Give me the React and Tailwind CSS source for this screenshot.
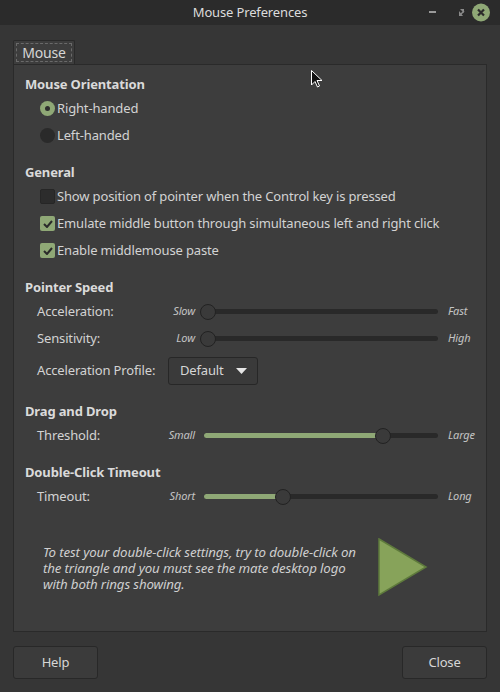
import React from "react";

const font = { fontFamily: '"Noto Sans", "Open Sans", sans-serif', letterSpacing: "-0.15px" };

const Header = ({ children }) => (
  <div className="h-[20px] flex items-center text-[13px] font-bold text-[#dadada]">{children}</div>
);

const Radio = ({ checked, label }) => (
  <div className="h-[27px] flex items-center pl-[15px]">
    {checked ? (
      <span className="w-[15px] h-[15px] rounded-full bg-[#8fa876] flex items-center justify-center">
        <span className="w-[5px] h-[5px] rounded-full bg-[#2d2d2d]" />
      </span>
    ) : (
      <span className="w-[15px] h-[15px] rounded-full bg-[#2a2a2a]" />
    )}
    <span className="ml-[2px] text-[13px] text-[#d3d3d3]">{label}</span>
  </div>
);

const Check = ({ checked, label }) => (
  <div className="h-[27px] flex items-center pl-[15px]">
    {checked ? (
      <span className="w-[15px] h-[15px] rounded-[2px] bg-[#8fa876] flex items-center justify-center">
        <svg width="10" height="8" viewBox="0 0 10 8">
          <path d="M1 4 L4 7 L9 1" fill="none" stroke="#2a2a2a" strokeWidth="2" />
        </svg>
      </span>
    ) : (
      <span className="w-[15px] h-[15px] rounded-[2px] bg-[#2c2c2c] border border-[#262626]" />
    )}
    <span className="ml-[2px] text-[13px] text-[#d3d3d3]">{label}</span>
  </div>
);

const Slider = ({ label, min, max, value, filled }) => {
  const pct = value * 226 + 4;
  return (
    <div className="h-[27px] flex items-center pl-[12px]">
      <span className="w-[131px] text-[13px] text-[#d3d3d3]">{label}</span>
      <span className="w-[27px] text-right text-[11px] italic text-[#c4c4c4] whitespace-nowrap">{min}</span>
      <div className="relative ml-[9px] w-[234px] h-[16px] flex items-center">
        <div className="w-full h-[5px] rounded-full bg-[#292929] overflow-hidden">
          {filled && <div className="h-full bg-[#8fa876]" style={{ width: pct }} />}
        </div>
        <span
          className="absolute top-0 w-[16px] h-[16px] rounded-full bg-[#3a3a3a] border border-[#222]"
          style={{ left: pct - 8 }}
        />
      </div>
      <span className="ml-[10px] text-[11px] italic text-[#c4c4c4]">{max}</span>
    </div>
  );
};

export default function App() {
  return (
    <div className="w-[500px] h-[692px] bg-[#363636] flex flex-col relative" style={font}>
      {/* Title bar */}
      <div className="h-[25px] bg-[#2b2b2b] flex items-center relative">
        <div className="flex-1 text-center text-[13px] text-[#dcdcdc]">Mouse Preferences</div>
        <div className="absolute right-[6px] top-0 h-[25px] flex items-center">
          <svg width="30" height="25" viewBox="0 0 30 25">
            <rect x="19" y="11" width="7" height="2" fill="#9a9a9a" />
          </svg>
          <svg width="30" height="25" viewBox="0 0 30 25">
            <path d="M20 9 L24 9 L24 13 Z" fill="#8a8a8a" />
            <path d="M19 11 L19 16 L23 16 Z" fill="#8a8a8a" />
            <path d="M19.5 15.5 L24 11" stroke="#8a8a8a" strokeWidth="1.5" />
          </svg>
          <svg width="24" height="25" viewBox="0 0 24 25">
            <circle cx="11" cy="12.5" r="9" fill="#8fa876" />
            <path d="M8 9.5 L14 15.5 M14 9.5 L8 15.5" stroke="#2b2b2b" strokeWidth="2.2" />
          </svg>
        </div>
      </div>

      {/* Tab */}
      <div className="mt-[15px] ml-[13px] flex">
        <div className="w-[62px] h-[24px] bg-[#3d3d3d] border border-b-0 border-[#2a2a2a] rounded-t-[2px] p-[2px]">
          <div className="h-full border border-dashed border-[#6a6a6a] flex items-center justify-center text-[14px] text-[#d6d6d6]">
            Mouse
          </div>
        </div>
      </div>

      {/* Panel */}
      <div className="mx-[13px] h-[568px] bg-[#3d3d3d] border border-[#2a2a2a] pl-[11px] pt-[10px] flex flex-col">
        <Header>Mouse Orientation</Header>
        <Radio checked label="Right-handed" />
        <Radio label="Left-handed" />

        <div className="h-[14px]" />
        <Header>General</Header>
        <Check label="Show position of pointer when the Control key is pressed" />
        <Check checked label="Emulate middle button through simultaneous left and right click" />
        <Check checked label="Enable middlemouse paste" />

        <div className="h-[14px]" />
        <Header>Pointer Speed</Header>
        <Slider label="Acceleration:" min="Slow" max="Fast" value={0} />
        <Slider label="Sensitivity:" min="Low" max="High" value={0} />
        <div className="h-[38px] flex items-center pl-[12px]">
          <span className="w-[131px] text-[13px] text-[#d3d3d3]">Acceleration Profile:</span>
          <div className="w-[90px] h-[28px] rounded-[3px] border border-[#272727] bg-[#3a3a3a] flex items-center pl-[11px] pr-[10px] justify-between">
            <span className="text-[13px] text-[#d6d6d6]">Default</span>
            <svg width="11" height="6" viewBox="0 0 11 6">
              <path d="M0 0 L11 0 L5.5 6 Z" fill="#e6e6e6" />
            </svg>
          </div>
        </div>

        <div className="h-[12px]" />
        <Header>Drag and Drop</Header>
        <Slider label="Threshold:" min="Small" max="Large" value={0.774} filled />

        <div className="h-[14px]" />
        <Header>Double-Click Timeout</Header>
        <Slider label="Timeout:" min="Short" max="Long" value={0.33} filled />

        <div className="flex-1 flex items-center pl-[18px] pb-[5px]">
          <p className="w-[322px] text-[13.3px] leading-[16px] italic text-[#cfcfcf]">
            To test your double-click settings, try to double-click on the triangle and you must see the mate desktop logo with both rings showing.
          </p>
          <svg width="50" height="60" viewBox="0 0 50 60" className="ml-[13px]">
            <path d="M1 1 L48 29 L1 57 Z" fill="#87a35a" stroke="#5e7a3c" strokeWidth="1.5" />
          </svg>
        </div>
      </div>

      {/* Buttons */}
      <div className="flex justify-between px-[13px] pt-[14px]">
        <button className="w-[85px] h-[33px] rounded-[3px] bg-[#3b3b3b] border border-[#282828] text-[13px] text-[#d6d6d6]">
          Help
        </button>
        <button className="w-[85px] h-[33px] rounded-[3px] bg-[#3b3b3b] border border-[#282828] text-[13px] text-[#d6d6d6]">
          Close
        </button>
      </div>

      {/* Mouse cursor */}
      <svg className="absolute left-[311px] top-[70px]" width="13" height="20" viewBox="0 0 13 20">
        <path d="M0.5 0.5 L0.5 15 L4 11.5 L6.5 17 L8.5 16 L6 10.5 L11 10.5 Z" fill="#111" stroke="#fff" strokeWidth="1" />
      </svg>
    </div>
  );
}
